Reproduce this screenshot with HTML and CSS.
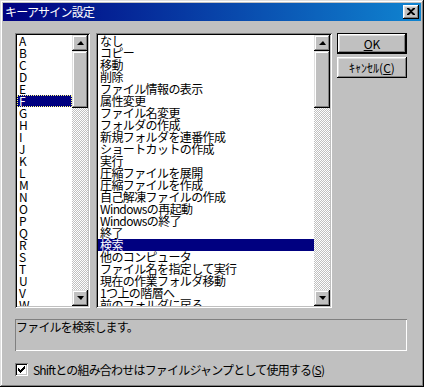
FILE: index.html
```html
<!DOCTYPE html>
<html lang="ja">
<head>
    <meta charset="UTF-8">
    <meta name="viewport" content="width=device-width, initial-scale=1.0">
    <title>キーアサイン設定</title>
    <link rel="stylesheet" href="styles.css">
</head>
<body>
    <div class="window">
        <div class="titlebar">
            <span class="title">キーアサイン設定</span>
            <button class="close-button">
                <svg width="8" height="7" viewBox="0 0 8 7">
                    <path d="M0 0h2l2 2 2-2h2v1L5 3.5 8 6v1H6L4 5 2 7H0V6l3-2.5L0 1z" fill="#000"/>
                </svg>
            </button>
        </div>
        <div class="content">
            <div class="top-row">
                <div class="listbox keys">
                    <ul class="items">
                        <li>A</li><li>B</li><li>C</li><li>D</li><li>E</li>
                        <li class="selected focused">F</li>
                        <li>G</li><li>H</li><li>I</li><li>J</li><li>K</li>
                        <li>L</li><li>M</li><li>N</li><li>O</li><li>P</li>
                        <li>Q</li><li>R</li><li>S</li><li>T</li><li>U</li>
                        <li>V</li><li>W</li>
                    </ul>
                    <div class="scrollbar">
                        <div class="scroll-btn"><span class="arrow up"></span></div>
                        <div class="thumb"></div>
                        <div class="track"></div>
                        <div class="scroll-btn"><span class="arrow down"></span></div>
                    </div>
                </div>
                <div class="listbox commands">
                    <ul class="items">
                        <li>なし</li>
                        <li>コピー</li>
                        <li>移動</li>
                        <li>削除</li>
                        <li>ファイル情報の表示</li>
                        <li>属性変更</li>
                        <li>ファイル名変更</li>
                        <li>フォルダの作成</li>
                        <li>新規フォルダを連番作成</li>
                        <li>ショートカットの作成</li>
                        <li>実行</li>
                        <li>圧縮ファイルを展開</li>
                        <li>圧縮ファイルを作成</li>
                        <li>自己解凍ファイルの作成</li>
                        <li>Windowsの再起動</li>
                        <li>Windowsの終了</li>
                        <li>終了</li>
                        <li class="selected">検索</li>
                        <li>他のコンピュータ</li>
                        <li>ファイル名を指定して実行</li>
                        <li>現在の作業フォルダ移動</li>
                        <li>1つ上の階層へ</li>
                        <li>前のフォルダに戻る</li>
                    </ul>
                    <div class="scrollbar">
                        <div class="scroll-btn"><span class="arrow up"></span></div>
                        <div class="thumb"></div>
                        <div class="track"></div>
                        <div class="scroll-btn"><span class="arrow down"></span></div>
                    </div>
                </div>
                <div class="buttons">
                    <button class="btn default"><u>O</u>K</button>
                    <button class="btn">ｷｬﾝｾﾙ(<u>C</u>)</button>
                </div>
            </div>
            <div class="description">ファイルを検索します。</div>
            <label class="check-row">
                <span class="checkbox">
                    <svg width="7" height="7" viewBox="0 0 7 7">
                        <path d="M0 2h1v1h1v1h1V3h1V2h1V1h1V0h1v3H6v1H5v1H4v1H3v1H2V6H1V5H0z" fill="#000"/>
                    </svg>
                </span>
                <span class="check-label">Shiftとの組み合わせはファイルジャンプとして使用する(<u>S</u>)</span>
            </label>
        </div>
    </div>
</body>
</html>
```

FILE: styles.css
```css
/* Reset */
* {
  box-sizing: border-box;
  margin: 0;
  padding: 0;
}

body {
  font-family: "Noto Sans CJK JP", "Liberation Sans", sans-serif;
  font-size: 12px;
  line-height: 12px;
  color: #000;
  background-color: #c0c0c0;
}

/* Window frame */
.window {
  width: 424px;
  height: 387px;
  padding: 3px;
  background-color: #c0c0c0;
  box-shadow: inset -1px -1px #000, inset 1px 1px #dfdfdf,
              inset -2px -2px #808080, inset 2px 2px #fff;
}

/* Title bar */
.titlebar {
  height: 18px;
  display: flex;
  align-items: center;
  justify-content: space-between;
  padding: 0 2px 0 2px;
  background: linear-gradient(to right, #000080, #1084d0);
  color: #fff;
}

.title {
  font-size: 12px;
  line-height: 12px;
  letter-spacing: -0.8px;
}

.close-button {
  width: 16px;
  height: 14px;
  border: none;
  background-color: #c0c0c0;
  display: flex;
  align-items: center;
  justify-content: center;
  padding-bottom: 1px;
  box-shadow: inset -1px -1px #000, inset 1px 1px #fff,
              inset -2px -2px #808080, inset 2px 2px #dfdfdf;
}

/* Body */
.content {
  padding: 12px 0 0 12px;
}

.top-row {
  display: flex;
  height: 275px;
}

/* List boxes */
.listbox {
  display: flex;
  padding: 2px;
  background-color: #fff;
  box-shadow: inset 1px 1px #808080, inset -1px -1px #fff,
              inset 2px 2px #000, inset -2px -2px #c0c0c0;
}

.keys {
  width: 75px;
}

.commands {
  width: 236px;
  margin-left: 6px;
}

.items {
  list-style: none;
  flex: 1;
  overflow: hidden;
  letter-spacing: -0.6px;
}

.items li {
  height: 12px;
  padding-left: 2px;
  white-space: nowrap;
}

.items li.selected {
  background-color: #000080;
  color: #fff;
}

.items li.focused {
  outline: 1px dotted #ffff80;
  outline-offset: -1px;
}

/* Scrollbar */
.scrollbar {
  width: 16px;
  display: flex;
  flex-direction: column;
}

.scroll-btn,
.thumb {
  background-color: #c0c0c0;
  box-shadow: inset -1px -1px #000, inset 1px 1px #dfdfdf,
              inset -2px -2px #808080, inset 2px 2px #fff;
}

.scroll-btn {
  height: 16px;
  display: flex;
  align-items: center;
  justify-content: center;
}

.thumb {
  height: 57px;
}

.track {
  flex: 1;
  background: repeating-conic-gradient(#c0c0c0 0 25%, #fff 0 50%) 0 0 / 2px 2px;
}

.arrow {
  width: 0;
  height: 0;
  border-left: 4px solid transparent;
  border-right: 3px solid transparent;
}

.arrow.up {
  border-bottom: 4px solid #000;
}

.arrow.down {
  border-top: 4px solid #000;
}

/* Buttons */
.buttons {
  display: flex;
  flex-direction: column;
  gap: 3px;
  margin-left: 5px;
}

.btn {
  width: 70px;
  height: 21px;
  border: none;
  background-color: #c0c0c0;
  font-family: "Noto Sans CJK JP", "Liberation Sans", sans-serif;
  font-size: 12px;
  line-height: 12px;
  color: #000;
  box-shadow: inset -1px -1px #000, inset 1px 1px #fff,
              inset -2px -2px #808080, inset 2px 2px #dfdfdf;
}

.btn.default {
  box-shadow: inset 0 0 0 1px #000,
              inset -2px -2px #000, inset 2px 2px #fff,
              inset -3px -3px #808080, inset 3px 3px #dfdfdf;
}

/* Description */
.description {
  width: 392px;
  height: 32px;
  margin-top: 11px;
  padding: 2px 0 0 1px;
  letter-spacing: -0.8px;
  box-shadow: inset 1px 1px #808080, inset -1px -1px #fff;
}

/* Check row */
.check-row {
  display: flex;
  align-items: center;
  gap: 5px;
  margin-top: 12px;
  height: 13px;
}

.check-label {
  letter-spacing: -0.8px;
}

.checkbox {
  width: 13px;
  height: 13px;
  display: flex;
  align-items: center;
  justify-content: center;
  background-color: #fff;
  box-shadow: inset 1px 1px #808080, inset -1px -1px #fff,
              inset 2px 2px #000, inset -2px -2px #c0c0c0;
}
```
